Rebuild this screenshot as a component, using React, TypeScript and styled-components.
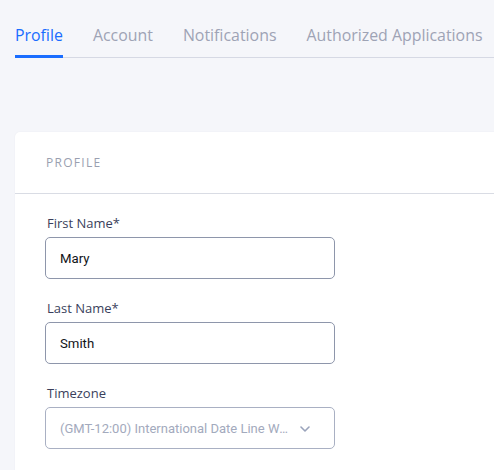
import React from "react";
import styled, { createGlobalStyle } from "styled-components";

const Global = createGlobalStyle`
  html, body { margin: 0; padding: 0; background: #f5f6fa; overflow: hidden; }
  body { font-family: "Open Sans", "Liberation Sans", sans-serif; }
  * { box-sizing: border-box; }
`;

const Page = styled.div`
  width: 494px;
  height: 470px;
  padding-left: 15px;
  overflow: hidden;
  background: #f5f6fa;
`;

const Tabs = styled.nav`
  display: flex;
  gap: 30px;
  width: 600px;
  height: 58px;
  border-bottom: 1px solid #d6d9e4;
  align-items: flex-end;
`;

const Tab = styled.div<{ $active?: boolean }>`
  font-family: "Open Sans", sans-serif;
  font-size: 15.9px;
  line-height: 20px;
  padding-bottom: 10px;
  white-space: nowrap;
  color: ${(p) => (p.$active ? "#1a6dff" : "#9ea3b5")};
  border-bottom: 3px solid ${(p) => (p.$active ? "#1a6dff" : "transparent")};
  margin-bottom: -1px;
`;

const Card = styled.section`
  margin-top: 74px;
  width: 600px;
  background: #ffffff;
  border-radius: 5px;
  box-shadow: 0 0 2px rgba(30, 40, 80, 0.06);
`;

const CardHeader = styled.header`
  height: 62px;
  display: flex;
  align-items: center;
  padding-left: 31px;
  border-bottom: 1px solid #d9dce4;
  font-family: "Open Sans", sans-serif;
  font-size: 12px;
  letter-spacing: 1.3px;
  color: #9a9fb0;
  text-transform: uppercase;
`;

const CardBody = styled.div`
  padding: 20px 30px 40px 30px;
  display: flex;
  flex-direction: column;
  gap: 20px;
`;

const Field = styled.div`
  display: flex;
  flex-direction: column;
  gap: 5px;
  width: 290px;
`;

const Label = styled.label`
  font-family: "Open Sans", sans-serif;
  font-size: 13px;
  line-height: 18px;
  padding-left: 2px;
  color: #3a3f5c;
`;

const Input = styled.div`
  height: 42px;
  border: 1px solid #8e96ab;
  border-radius: 5px;
  display: flex;
  align-items: center;
  padding: 0 14px;
  font-family: "Roboto", sans-serif;
  font-size: 13.2px;
  color: #111318;
`;

const Select = styled(Input)`
  border-color: #a9b0c3;
  color: #a3aabd;
  justify-content: space-between;
  gap: 6px;
  padding-right: 24px;
`;

const SelectText = styled.span`
  overflow: hidden;
  white-space: nowrap;
  text-overflow: ellipsis;
  font-size: 13px;
`;

const Chevron = () => (
  <svg width="10" height="8" viewBox="0 0 10 8" fill="none" style={{ flexShrink: 0, marginTop: 2 }}>
    <path d="M1 2l4 4 4-4" stroke="#9aa3bb" strokeWidth="1.6" strokeLinecap="round" strokeLinejoin="round" />
  </svg>
);

export default function App() {
  return (
    <Page>
      <Global />
      <Tabs>
        <Tab $active>Profile</Tab>
        <Tab>Account</Tab>
        <Tab>Notifications</Tab>
        <Tab>Authorized Applications</Tab>
      </Tabs>
      <Card>
        <CardHeader>Profile</CardHeader>
        <CardBody>
          <Field>
            <Label>First Name*</Label>
            <Input>Mary</Input>
          </Field>
          <Field>
            <Label>Last Name*</Label>
            <Input>Smith</Input>
          </Field>
          <Field>
            <Label>Timezone</Label>
            <Select>
              <SelectText>(GMT-12:00) International Date Line West</SelectText>
              <Chevron />
            </Select>
          </Field>
        </CardBody>
      </Card>
    </Page>
  );
}
